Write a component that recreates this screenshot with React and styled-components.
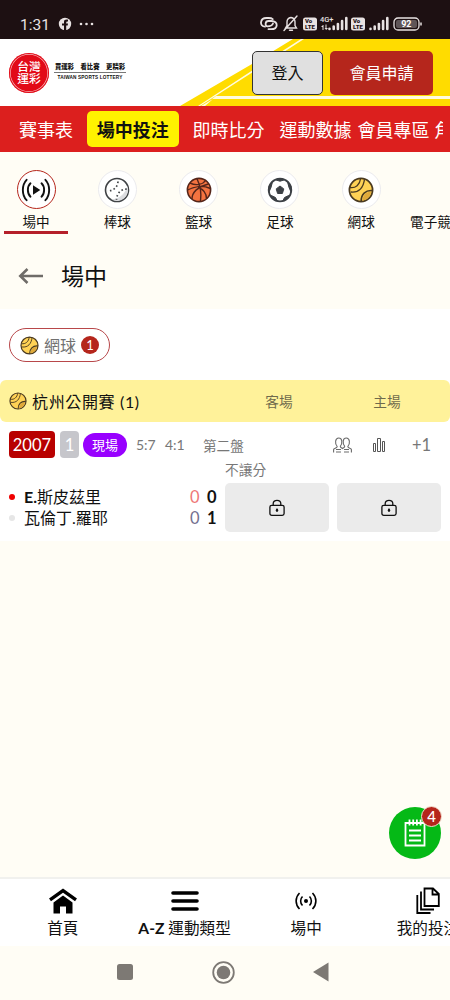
import React from 'react';
import styled, { createGlobalStyle } from 'styled-components';

const GlobalStyle = createGlobalStyle`
  * {
    box-sizing: border-box;
  }
  body {
    margin: 0;
    background: #fffdf5;
  }
  button {
    font-family: inherit;
    padding: 0;
    border: none;
    flex-shrink: 0;
  }
  svg {
    display: block;
    flex-shrink: 0;
  }
`;

const Phone = styled.div`
  width: 450px;
  height: 1000px;
  overflow: hidden;
  position: relative;
  display: flex;
  flex-direction: column;
  background: #fffdf5;
  color: #111;
  white-space: nowrap;
  font-family: Lato, "Noto Sans CJK TC", sans-serif;
`;

/* status bar */
const StatusBar = styled.div`
  height: 39px;
  flex-shrink: 0;
  padding: 8px 27px 0 20px;
  display: flex;
  justify-content: space-between;
  align-items: center;
  background: #1d1012;
  color: #e8e2e2;
`;

const StatusGroup = styled.div`
  display: flex;
  align-items: center;
`;

const Clock = styled.div`
  width: 38px;
  padding-top: 2px;
  font: 400 15.5px/20px Roboto, sans-serif;
`;

/* header */
const Header = styled.div`
  height: 67px;
  flex-shrink: 0;
  position: relative;
  display: flex;
  align-items: center;
  padding: 0 17px 0 9px;
  background: #fff;
`;

const HeaderArt = styled.svg`
  position: absolute;
  top: 0;
  left: 0;
`;

const Logo = styled.div`
  width: 40px;
  height: 40px;
  position: relative;
  border-radius: 50%;
  background: #e20a17;
  box-shadow: inset 0 0 0 1px #e20a17, inset 0 0 0 1.7px #f7b5b8;
  color: #fff;
  font-size: 11.8px;
  font-weight: 500;
  text-align: center;
  padding-top: 7px;
`;

const LogoLine = styled.div`
  height: 12.5px;
  line-height: 14px;
`;

const Slogan = styled.div`
  position: relative;
  width: 72px;
  margin-left: 5px;
  margin-top: -1px;
  text-align: center;
`;

const SloganTop = styled.div`
  display: flex;
  justify-content: space-between;
  padding: 0 1px;
  font-size: 6.3px;
  font-weight: 900;
  line-height: 10px;
  border-bottom: 1px solid #777;
`;

const SloganBottom = styled.div`
  font: 700 4.7px/9px "Liberation Sans", sans-serif;
  letter-spacing: 0.15px;
`;

const HeaderButton = styled.button`
  position: relative;
  width: ${(props) => (props.$primary ? 103 : 71)}px;
  height: 44px;
  margin-left: ${(props) => (props.$primary ? '7px' : 'auto')};
  border-radius: 5px;
  border: ${(props) => (props.$primary ? 'none' : '1px solid #333')};
  background: ${(props) => (props.$primary ? '#b5261c' : '#e0e0e0')};
  color: ${(props) => (props.$primary ? '#fff' : '#111')};
  font-size: 16px;
  line-height: 24px;
`;

/* red menu */
const MenuBar = styled.div`
  flex-shrink: 0;
  background: #dc1f1e;
`;

const Menu = styled.div`
  height: 46px;
  width: 443px;
  display: flex;
  align-items: center;
  padding-left: 9px;
  overflow: hidden;
`;

const MenuItem = styled.div`
  flex-shrink: 0;
  height: 36px;
  margin-left: ${(props) => props.$gap || 0}px;
  padding: 0 ${(props) => (props.$active ? 9.8 : 0)}px;
  border-radius: 5px;
  background: ${(props) => (props.$active ? '#fff200' : 'transparent')};
  color: ${(props) => (props.$active ? '#111' : '#fff')};
  font-size: 18px;
  font-weight: ${(props) => (props.$active ? 700 : 400)};
  line-height: 38px;
`;

/* sports */
const Sports = styled.div`
  height: 94px;
  flex-shrink: 0;
  padding: 18px 0 0 4px;
  display: flex;
  gap: 17.3px;
`;

const Sport = styled.div`
  width: ${(props) => props.$width || 64}px;
  height: 64px;
  flex-shrink: 0;
  display: flex;
  flex-direction: column;
  align-items: center;
  font-size: 13.6px;
  line-height: 21px;
`;

const SportCircle = styled.div`
  width: 39px;
  height: 39px;
  flex-shrink: 0;
  margin-bottom: 3px;
  border-radius: 50%;
  border: 1px solid ${(props) => (props.$active ? '#b5261c' : '#ebebee')};
  background: #fff;
  display: flex;
  align-items: center;
  justify-content: center;
`;

const Underline = styled.div`
  width: 64px;
  height: 3px;
  flex-shrink: 0;
  margin-top: -2px;
  background: #b5202a;
`;

const TitleRow = styled.div`
  height: 63px;
  flex-shrink: 0;
  display: flex;
  align-items: center;
  gap: 17px;
  padding: 0 0 3px 18px;
  font-size: 23px;
  line-height: 30px;
`;

const Panel = styled.div`
  height: 232px;
  flex-shrink: 0;
  background: #fff;
  padding-top: 19px;
`;

const FilterPill = styled.div`
  width: 101px;
  height: 34px;
  margin-left: 9px;
  padding-left: 10px;
  display: flex;
  align-items: center;
  border: 1px solid #b8474a;
  border-radius: 17px;
  color: #707070;
  font-size: 16px;
`;

const Count = styled.div`
  width: 18px;
  height: 18px;
  margin-left: 5px;
  border-radius: 50%;
  background: #b5261c;
  color: #fff;
  font-size: 13px;
  font-weight: 400;
  line-height: 18px;
  text-align: center;
`;

const PillLabel = styled.span`
  margin-left: 5px;
`;

const League = styled.div`
  height: 42px;
  margin-top: 18px;
  padding: 0 9px 1px;
  display: flex;
  align-items: center;
  border-radius: 6px;
  background: #fff29a;
`;

const LeagueName = styled.div`
  width: 193px;
  margin-left: 5px;
  font-size: 16px;
  letter-spacing: 0.65px;
`;

const Side = styled.div`
  width: 108px;
  text-align: center;
  color: #6f6a4c;
  font-size: 13.7px;
`;

/* match */
const InfoRow = styled.div`
  height: 27px;
  margin-top: 9px;
  padding-left: 9px;
  display: flex;
  align-items: center;
  color: #777;
`;

const Tag = styled.div`
  width: ${(props) => props.$width}px;
  height: 27px;
  margin-right: ${(props) => props.$gap}px;
  border-radius: 4px;
  background: ${(props) => props.$color};
  color: #fff;
  text-align: center;
  font-size: 16.6px;
  line-height: 28px;
`;

const LiveTag = styled.div`
  width: 44px;
  height: 24px;
  border-radius: 12px;
  background: #9800ff;
  color: #fff;
  text-align: center;
  font-size: 13px;
  line-height: 24px;
`;

const SetScore = styled.div`
  width: 20px;
  margin-left: 9px;
  font-size: 14px;
`;

const Period = styled.div`
  width: 130px;
  margin-left: 18px;
  font-size: 13.6px;
`;

const Stats = styled.div`
  margin-left: 21px;
`;

const More = styled.div`
  margin-left: 26px;
  font-size: 16.5px;
`;

const Market = styled.div`
  height: 25px;
  padding-left: 225px;
  color: #777;
  font-size: 13.7px;
  line-height: 23px;
`;

const Match = styled.div`
  display: flex;
  padding-left: 9px;
`;

const Players = styled.div`
  width: 216px;
  padding-top: 3px;
`;

const Player = styled.div`
  height: 21px;
  display: flex;
  align-items: center;
  font-size: 16px;
`;

const PlayerName = styled.div`
  margin-top: -2px;

  b {
    font-weight: 700;
  }
`;

const ServeDot = styled.div`
  width: 6px;
  height: 6px;
  margin-right: 9px;
  border-radius: 50%;
  background: ${(props) => (props.$on ? '#f00000' : '#e6e6e6')};
`;

const Score = styled.div`
  width: 10px;
  margin-left: ${(props) => (props.$first ? 'auto' : '7px')};
  margin-right: ${(props) => (props.$first ? 0 : '8px')};
  color: ${(props) => props.$color || '#111'};
  font-size: 16.5px;
  font-weight: ${(props) => (props.$first ? 400 : 700)};
`;

const OddsButton = styled.button`
  width: 103.5px;
  height: 49px;
  margin-right: 8.5px;
  border-radius: 5px;
  background: #ebebeb;
  display: flex;
  align-items: center;
  justify-content: center;
`;

const SlipButton = styled.button`
  position: absolute;
  left: 389px;
  top: 807px;
  width: 52px;
  height: 52px;
  border-radius: 50%;
  background: #05b916;
  display: flex;
  align-items: center;
  justify-content: center;
`;

const SlipBadge = styled.div`
  position: absolute;
  left: 32px;
  top: -1px;
  width: 21px;
  height: 21px;
  border-radius: 50%;
  border: 1px solid #f3dfd0;
  background: #b5261c;
  color: #fff;
  font-size: 15px;
  font-weight: 500;
  line-height: 19px;
`;

/* bottom */
const BottomNav = styled.div`
  height: 69px;
  flex-shrink: 0;
  margin-top: auto;
  padding-left: 2px;
  display: flex;
  border-top: 2px solid #f1f1ee;
  background: #fff;
`;

const NavItem = styled.div`
  width: 121.7px;
  flex-shrink: 0;
  padding-top: 7px;
  display: flex;
  flex-direction: column;
  align-items: center;
  font-size: 15.6px;
  line-height: 24px;
`;

const NavIcon = styled.div`
  height: 30px;
  display: flex;
  align-items: center;
`;

const SystemNav = styled.div`
  height: 54px;
  flex-shrink: 0;
  padding: 0 121px 2px 117px;
  display: flex;
  align-items: center;
  justify-content: space-between;
`;

const TennisIcon = ({ size }) => (
  <svg width={size} height={size} viewBox="0 0 26 26" fill="none" stroke="#4a3a20" strokeWidth="1.7">
    <circle cx="13" cy="13" r="11.6" fill="#ffd255" />
    <path d="M23 14.5C18 15 14.5 18.5 14.5 23.8C19 23 23 19 23 14.5Z" fill="#e0a93a" stroke="none" />
    <path d="M2 10.5C7.5 11.5 12 7.5 12.5 1.8M2.8 15C11 16 15.5 10.5 16.5 2.2" strokeWidth="1.3" />
    <path d="M13.2 24.3C13 17.5 17.5 13 24.3 13.6" strokeWidth="1.6" />
  </svg>
);

const BaseballIcon = () => (
  <svg width="26" height="26" viewBox="0 0 26 26" fill="none" stroke="#3f4245">
    <circle cx="13" cy="13" r="11.5" fill="#fff" strokeWidth="1.6" />
    <path d="M23.3 9A11 11 0 0 1 7 22.2C14 22.5 21 18 23.3 9Z" fill="#dcdde0" stroke="none" />
    <path d="M14 4.5C13.5 10.5 9.5 13.8 3.5 14" strokeWidth="1.7" strokeDasharray="1.6 2.3" />
    <path d="M22.8 12C16.5 12.5 13 16 12.5 22.8" strokeWidth="1.7" strokeDasharray="1.6 2.3" />
  </svg>
);

const BasketballIcon = () => (
  <svg width="26" height="26" viewBox="0 0 26 26" fill="none" stroke="#54251a" strokeWidth="1.4">
    <circle cx="13" cy="13" r="11.6" fill="#f47340" strokeWidth="1.6" />
    <path d="M11 1.8C14 8 15.5 17 14.5 24.4M4 6C10 9 17 7.5 19.5 3.5M1.6 13C8 9.5 17 8 24.4 11.5M6 22C6 15 12 10 22.5 7M20.5 21.8C20.5 17 17.5 12.5 12 10.2" />
  </svg>
);

const SoccerIcon = () => (
  <svg width="26" height="26" viewBox="0 0 26 26" fill="#3c4045" stroke="#3c4045">
    <circle cx="13" cy="13" r="11.3" fill="#fff" strokeWidth="1.8" />
    <path d="M13 9L16.8 11.9L15.4 16.5H10.6L9.2 11.9Z" />
    <path d="M8 2.7L13 4.2L18 2.7L13 1.5ZM2 9L2.2 14.5L4 10.5L5.3 5.5ZM24 9L23.8 14.5L22 10.5L20.7 5.5ZM4.3 18.5L8.5 20.5L10.2 24L6 21.8ZM21.7 18.5L17.5 20.5L15.8 24L20 21.8Z" />
  </svg>
);

const LiveIcon = () => (
  <svg width="30" height="26" viewBox="0 0 30 26" fill="none" stroke="#111" strokeWidth="1.9" strokeLinecap="round">
    <path d="M12 8.2V17.8L19.3 13Z" fill="#111" stroke="none" />
    <path d="M9.5 6.3C6 9.5 6 16.5 9.5 19.7M20.5 6.3C24 9.5 24 16.5 20.5 19.7M5.6 2.8C.6 8 .6 18 5.6 23.2M24.4 2.8C29.4 8 29.4 18 24.4 23.2" />
  </svg>
);

const LockIcon = () => (
  <svg width="16" height="18" viewBox="0 0 16 18" fill="none" stroke="#111" strokeWidth="1.3">
    <rect x=".9" y="6.3" width="14.2" height="10" rx="1.8" />
    <path d="M4.2 6.2V4.5C4.2 .3 11.8 .3 11.8 4.5V6.2" />
    <ellipse cx="8" cy="11.3" rx="1.2" ry="1.7" fill="#111" stroke="none" />
  </svg>
);

const PeopleIcon = () => (
  <svg width="19" height="16" viewBox="0 0 19 16" fill="none" stroke="#6c6c6c" strokeWidth="1.1">
    <path d="M.6 15.5V12.5C.6 11 4.2 11.3 4.2 9.5C1.5 6.5 2.2 1 5.7 1S9.8 5.8 7.3 9.3C7.3 10.8 8.8 10.8 9.5 11.5C10.2 10.8 11.7 10.8 11.7 9.3C9.2 5.8 9.8 1 13.3 1S17.5 6.5 14.8 9.5C14.8 11.3 18.4 11 18.4 12.5V15.5" />
    <path d="M3 12.5H8M11 12.5H16M3 15H8M11 15H16" />
  </svg>
);

const StatsIcon = () => (
  <svg width="13" height="14" viewBox="0 0 13 14" fill="none" stroke="#555" strokeWidth="1">
    <path d="M.5 5.5H2.5V13.5H.5ZM4.5 .5H7.5V13.5H4.5ZM9.5 3.5H11.5V13.5H9.5Z" />
  </svg>
);

const Signal = () => (
  <svg width="20" height="15" viewBox="0 0 20 15" stroke="#e8e2e2" strokeWidth="2.6" strokeLinecap="round">
    <path d="M1.5 12.7V13M5.7 10.5V13M9.9 8V13M14.1 5V13M18.3 2V13" />
  </svg>
);

const VoLte = () => (
  <svg width="14" height="14" viewBox="0 0 14 14">
    <rect y=".5" width="14" height="13" rx="2.5" fill="#e8e2e2" />
    <text x="2" y="6.3" fontFamily="Roboto" fontSize="6" fontWeight="900" fill="#1d1012">Vo</text>
    <text x="2" y="12.3" fontFamily="Roboto" fontSize="6" fontWeight="900" fill="#1d1012">LTE</text>
  </svg>
);

const StatusIcons = styled(StatusGroup)`
  gap: 3.5px;
`;

const Network = styled.div`
  display: flex;
`;

const menu = [
  { label: '賽事表', gap: 10 },
  { label: '場中投注', gap: 14, active: true },
  { label: '即時比分', gap: 14 },
  { label: '運動數據', gap: 15 },
  { label: '會員專區', gap: 6 },
  { label: '角子', gap: 5 },
];

const sports = [
  { label: '場中', icon: <LiveIcon />, active: true },
  { label: '棒球', icon: <BaseballIcon /> },
  { label: '籃球', icon: <BasketballIcon /> },
  { label: '足球', icon: <SoccerIcon /> },
  { label: '網球', icon: <TennisIcon size={26} /> },
  { label: '電子競技 - 英雄聯盟', width: 120 },
];

const players = [
  { initial: 'E.', name: '斯皮茲里', serve: true, points: 0, games: 0, color: '#ee7777' },
  { initial: '', name: '瓦倫丁.羅耶', serve: false, points: 0, games: 1, color: '#74708f' },
];

const App = () => (
  <Phone>
    <GlobalStyle />
    <StatusBar>
      <StatusGroup>
        <Clock>1:31</Clock>
        <svg width="36" height="14" viewBox="0 0 36 14" fill="#e8e2e2">
          <circle cx="7" cy="7" r="6.2" />
          <path d="M6 14V8.5H4V6.5H6V5C6 3 7.3 2.3 10 2.7V4.4C8.5 4.3 8.2 4.5 8.2 6.5H10L9.7 8.5H8.2V14Z" fill="#1d1012" />
          <circle cx="23" cy="7" r="1.3" />
          <circle cx="28.5" cy="7" r="1.3" />
          <circle cx="34" cy="7" r="1.3" />
        </svg>
      </StatusGroup>
      <StatusIcons>
        <svg width="18" height="15" viewBox="0 0 18 15" fill="none" stroke="#e8e2e2" strokeWidth="1.8" strokeLinecap="round">
          <path d="M13 7.5C12 10 10 10.3 7.5 10.3C4.8 10.3 4.8 5 8.5 5H11.5C18.5 5 18.5 13.2 11 13.2H8.5" />
          <path d="M5 10.7C-.8 10.5 -.3 2 6.5 2H8.5C11 2 12 2.5 12.7 3.2" />
        </svg>
        <svg width="18" height="17" viewBox="0 0 18 17" fill="none" stroke="#e8e2e2" strokeWidth="1.4" strokeLinecap="round">
          <path d="M3.5 13H14.5L13 10.5V7C13 4 11 2.8 9 2.5C7 2.8 5 4 5 7V10.5ZM7.5 15.3H10.5M15 1L2 15.5" />
        </svg>
        <VoLte />
        <Network>
          <svg width="7" height="15" viewBox="0 0 7 15" overflow="visible" fill="#e8e2e2">
            <text x="-1" y="5.5" fontFamily="Roboto" fontSize="7.5" fontWeight="500">4G+</text>
            <path d="M2 9L0 11H1.5V14H2.5V9ZM4.5 8.5V12H3.5L5.2 14L7 12H5.5V8.5Z" />
          </svg>
          <Signal />
        </Network>
        <VoLte />
        <Signal />
        <svg width="31" height="14" viewBox="0 0 31 14" fill="none" stroke="#e8e2e2">
          <rect x="2" y="1" width="25" height="12" rx="4" strokeWidth="1.3" />
          <rect x="4" y="3" width="21" height="8" rx="2" fill="#5f5557" stroke="none" />
          <path d="M29 5.5V8.5" strokeWidth="1.5" />
          <text x="9.2" y="10.2" fontFamily="Roboto" fontSize="9" fontWeight="700" fill="#fff" stroke="none">92</text>
        </svg>
      </StatusIcons>
    </StatusBar>

    <Header>
      <HeaderArt width="450" height="67" viewBox="0 0 450 67">
        <path d="M180 67L252 25L293 0H450V67Z" fill="#ffdc00" />
        <path d="M200 67L253 33L304 0H301L253 31L198 67ZM216 57H450V60H212ZM213 60L201 67H205Z" fill="#fffbe0" />
      </HeaderArt>
      <Logo>
        <LogoLine>台灣</LogoLine>
        <LogoLine>運彩</LogoLine>
      </Logo>
      <Slogan>
        <SloganTop>
          <span>買運彩</span>
          <span>看比賽</span>
          <span>更精彩</span>
        </SloganTop>
        <SloganBottom>TAIWAN SPORTS LOTTERY</SloganBottom>
      </Slogan>
      <HeaderButton>登入</HeaderButton>
      <HeaderButton $primary>會員申請</HeaderButton>
    </Header>

    <MenuBar>
      <Menu>
        {menu.map((item) => (
          <MenuItem key={item.label} $gap={item.gap} $active={item.active}>{item.label}</MenuItem>
        ))}
      </Menu>
    </MenuBar>

    <Sports>
      {sports.map((sport) => (
        <Sport key={sport.label} $width={sport.width}>
          <SportCircle $active={sport.active}>{sport.icon}</SportCircle>
          {sport.label}
          {sport.active && <Underline />}
        </Sport>
      ))}
    </Sports>

    <TitleRow>
      <svg width="26" height="18" viewBox="0 0 26 18" fill="none" stroke="#6f6c68" strokeWidth="2.6">
        <path d="M25 9H2.5M9.5 2L2.3 9L9.5 16" />
      </svg>
      場中
    </TitleRow>

    <Panel>
      <FilterPill>
        <TennisIcon size={19} />
        <PillLabel>網球</PillLabel>
        <Count>1</Count>
      </FilterPill>

      <League>
        <TennisIcon size={18} />
        <LeagueName>杭州公開賽 (1)</LeagueName>
        <Side>客場</Side>
        <Side>主場</Side>
      </League>

      <InfoRow>
        <Tag $width={46} $gap={5} $color="#b80000">2007</Tag>
        <Tag $width={19} $gap={4} $color="#c6c6cb">1</Tag>
        <LiveTag>現場</LiveTag>
        <SetScore>5:7</SetScore>
        <SetScore>4:1</SetScore>
        <Period>第二盤</Period>
        <PeopleIcon />
        <Stats><StatsIcon /></Stats>
        <More>+1</More>
      </InfoRow>
      <Market>不讓分</Market>

      <Match>
        <Players>
          {players.map((player) => (
            <Player key={player.name}>
              <ServeDot $on={player.serve} />
              <PlayerName>
                <b>{player.initial}</b>
                {player.name}
              </PlayerName>
              <Score $first $color={player.color}>{player.points}</Score>
              <Score>{player.games}</Score>
            </Player>
          ))}
        </Players>
        <OddsButton><LockIcon /></OddsButton>
        <OddsButton><LockIcon /></OddsButton>
      </Match>
    </Panel>

    <SlipButton>
      <svg width="22" height="28" viewBox="0 0 22 28" fill="none" stroke="#fff" strokeWidth="1.8">
        <path d="M1.5 4H20.5V26.5H1.5ZM5.5 .5V6.5M9.2 .5V6.5M12.9 .5V6.5M16.6 .5V6.5M5 11.5H17M5 16.5H17M5 21.5H17" />
      </svg>
      <SlipBadge>4</SlipBadge>
    </SlipButton>

    <BottomNav>
      <NavItem>
        <NavIcon>
          <svg width="28" height="26" viewBox="0 0 28 26">
            <path d="M4.5 14.5L14 7.5L23.5 14.5V25.5H17V18.5H11V25.5H4.5Z" />
            <path d="M1 11.8L14 2.7L27 11.8" fill="none" stroke="#000" strokeWidth="3.4" />
            <path d="M3 14L14 6.2L25 14" fill="none" stroke="#fff" strokeWidth=".8" />
          </svg>
        </NavIcon>
        首頁
      </NavItem>
      <NavItem>
        <NavIcon>
          <svg width="28" height="22" viewBox="0 0 28 22" stroke="#000" strokeWidth="3.6" strokeLinecap="round">
            <path d="M2 3H26M2 11H26M2 19H26" />
          </svg>
        </NavIcon>
        <div>
          <b>A-Z</b> 運動類型
        </div>
      </NavItem>
      <NavItem>
        <NavIcon>
          <svg width="22" height="18" viewBox="0 0 22 18" fill="none" stroke="#000" strokeWidth="1.6">
            <circle cx="11" cy="9" r="2" fill="#000" stroke="none" />
            <path d="M7.5 4.5C5 7 5 11 7.5 13.5M14.5 4.5C17 7 17 11 14.5 13.5M4.5 1C0 5.5 0 12.5 4.5 17M17.5 1C22 5.5 22 12.5 17.5 17" />
          </svg>
        </NavIcon>
        場中
      </NavItem>
      <NavItem>
        <NavIcon>
          <svg width="24" height="28" viewBox="0 0 24 28" fill="none" stroke="#000" strokeWidth="1.8">
            <path d="M8.5 1.5H17L22.8 7V19H8.5ZM16.5 1.5V7.5H22.5M5 4.5V22.5H18M1.3 8V26H14.5" />
          </svg>
        </NavIcon>
        我的投注
      </NavItem>
    </BottomNav>

    <SystemNav>
      <svg width="16" height="16">
        <rect width="16" height="16" rx="2.5" fill="#7d7974" />
      </svg>
      <svg width="23" height="23" viewBox="0 0 23 23">
        <circle cx="11.5" cy="11.5" r="10.3" fill="none" stroke="#7d7974" strokeWidth="1.8" />
        <circle cx="11.5" cy="11.5" r="6.8" fill="#7d7974" />
      </svg>
      <svg width="16" height="20" viewBox="0 0 16 20">
        <path d="M15.5 .5V19.5L0 10Z" fill="#7d7974" />
      </svg>
    </SystemNav>
  </Phone>
);

export default App;
